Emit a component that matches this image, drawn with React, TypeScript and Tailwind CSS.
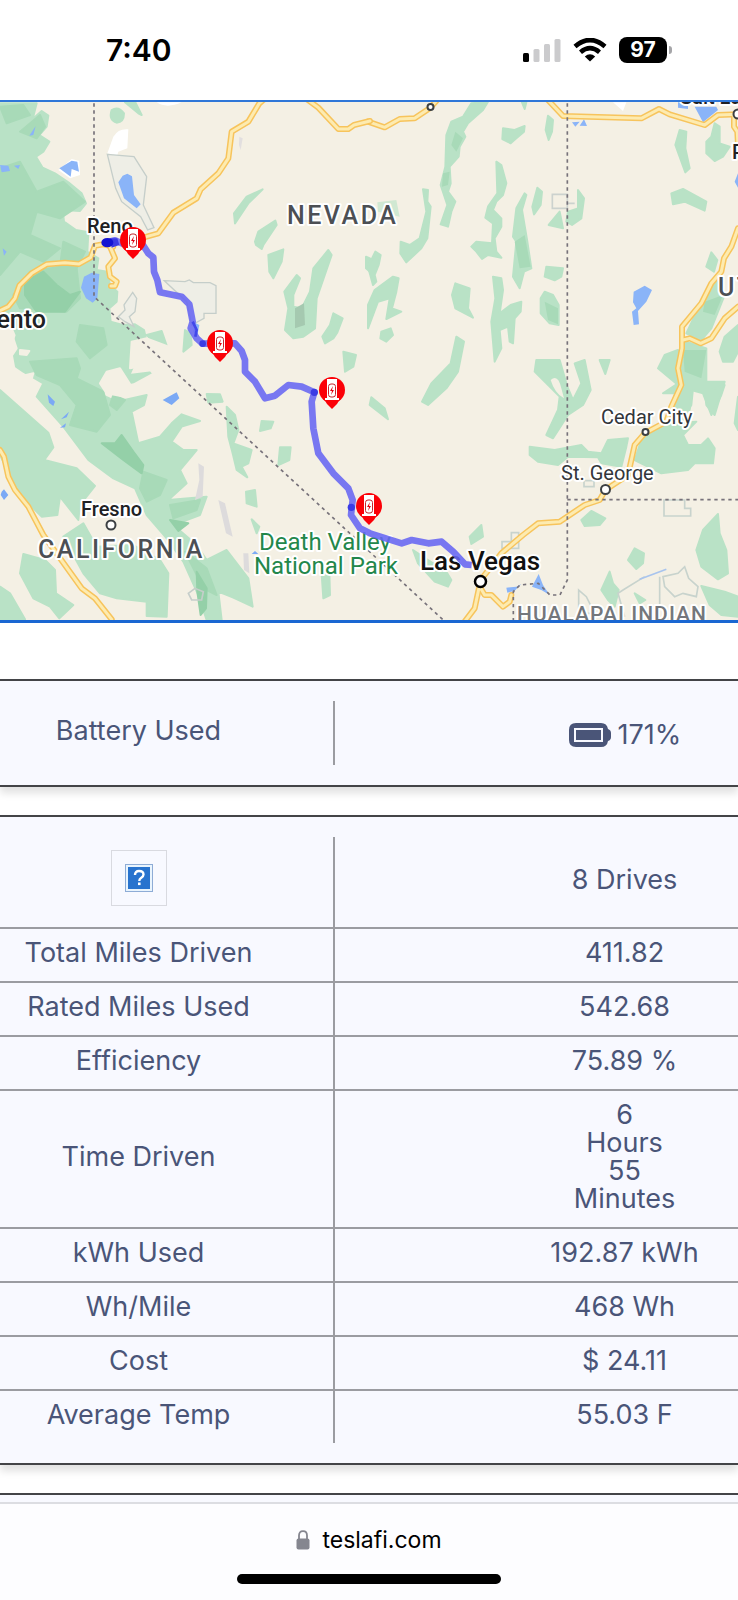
import React from "react";

const quadrants = {
  nw: "translate(0 95) scale(0.33333)",
  ne: "translate(368 95) scale(0.33333)",
  sw: "translate(0 360) scale(0.33333)",
  se: "translate(368 360) scale(0.33333)",
};

const forestNw = [
  "M0 25 L110 25 L98 72 L125 48 L145 62 L140 95 L118 120 L148 140 L130 170 L108 185 L128 218 L165 235 L205 262 L245 295 L258 325 L240 348 L188 345 L192 380 L228 405 L265 412 L262 470 L295 490 L290 525 L322 530 L330 570 L352 590 L350 620 L328 640 L332 680 L368 690 L405 688 L432 705 L440 740 L410 790 L388 840 L455 832 L400 862 L320 880 L305 900 L350 920 L440 900 L432 930 L395 950 L415 1045 L480 1025 L515 985 L545 958 L600 978 L545 995 L515 1040 L550 1065 L590 1065 L540 1125 L560 1165 L505 1215 L620 1205 L600 1260 L520 1290 L590 1350 L620 1395 L680 1365 L745 1450 L758 1535 L700 1508 L655 1490 L665 1575 L620 1575 L595 1500 L550 1400 L500 1330 L440 1260 L405 1180 L340 1150 L265 1095 L190 995 L110 905 L130 865 L70 830 L48 815 L38 760 L50 720 L20 650 L0 640 Z",
  "M335 45 Q355 32 372 55 Q372 82 350 83 Q325 75 335 45 Z",
  "M375 22 L405 20 L425 60 L415 55 Z",
  "M705 385 L702 355 L740 305 L788 283 L745 325 Z",
  "M765 440 L775 410 L826 377 L830 390 L790 450 L785 462 L768 450 Z",
  "M805 480 L850 463 L845 500 L820 550 L808 530 Z",
  "M985 465 L995 480 L950 610 L945 700 L910 725 L880 730 L855 705 L865 640 L853 590 L890 540 L900 550 L880 600 L880 635 L905 640 L930 590 L940 520 Z",
  "M1000 655 L1028 670 L1012 712 L1000 730 L975 745 L967 725 L990 690 Z",
  "M1030 770 L1068 780 L1060 815 L1035 830 Z",
  "M440 720 L485 708 L500 752 L460 740 Z",
  "M555 705 L572 715 L575 750 L550 770 Z",
  "M1098 485 L1110 490 L1110 530 L1098 520 Z",
];

const forestNe = [
  "M310 25 L360 20 L345 45 L300 85 L285 110 L292 125 L275 155 L272 185 L245 215 L248 265 L240 290 L262 320 L250 350 L240 395 L218 388 L238 330 L218 270 L232 215 L235 120 L250 80 L285 65 Z",
  "M405 100 L440 105 L470 93 L468 110 L445 130 L428 145 L403 132 Z",
  "M462 22 L475 22 L470 42 Z",
  "M540 62 L555 75 L552 110 L542 135 L533 105 Z",
  "M385 200 L400 210 L415 265 L405 300 L385 320 L375 345 L400 370 L400 395 L380 430 L385 470 L400 488 L360 480 L342 492 L325 470 L310 455 L325 440 L372 445 L375 385 L352 368 L360 335 L388 295 Z",
  "M470 295 L475 300 L462 345 L478 440 L490 520 L468 530 L455 580 L435 545 L445 440 L435 425 L445 340 Z",
  "M508 278 L522 290 L518 330 L498 358 L493 335 Z",
  "M165 283 L180 285 L178 320 L188 335 L178 430 L160 460 L115 502 L97 475 L98 440 L125 450 L155 430 L175 350 Z",
  "M0 515 L22 470 L38 480 L32 510 L20 540 L25 560 L15 570 Z",
  "M0 630 L20 585 L75 545 L92 550 L85 590 L72 640 L100 650 L55 672 L65 610 L30 620 L0 700 Z",
  "M40 710 L68 700 L75 720 L55 740 L37 730 Z",
  "M262 565 L305 580 L300 640 L315 668 L262 640 L252 600 Z",
  "M375 545 L400 550 L405 585 L395 655 L428 630 L460 620 L458 650 L440 670 L435 745 L425 740 L420 695 L395 705 L400 760 L380 800 L375 740 L370 680 L382 610 Z",
  "M535 515 L585 520 L580 545 L560 556 L530 545 Z",
  "M530 590 L555 600 L572 630 L572 690 L545 685 L518 655 L518 610 Z",
  "M630 285 L648 310 L640 370 L612 390 L595 380 L600 350 L630 340 Z",
  "M575 350 L585 400 L542 390 Z",
  "M265 725 L288 740 L270 830 L235 880 L180 930 L162 920 L190 865 L248 805 Z",
  "M935 105 L955 110 L952 160 L965 220 L952 232 L922 150 Z",
  "M1040 85 L1055 95 L1055 145 L1085 155 L1065 185 L1040 198 L1015 175 L1015 140 L1030 125 Z",
  "M910 295 L945 282 L1015 320 L1010 347 L950 320 L915 328 Z",
  "M1030 472 L1048 495 L1038 530 L1015 515 Z",
  "M1045 550 L1070 600 L1030 700 L1000 735 L955 715 L1000 620 Z",
  "M1110 690 L1070 725 L1055 770 L1065 800 L1095 800 L1110 770 Z",
  "M955 740 L1015 760 L1015 860 L1070 860 L1040 960 L1015 930 L1010 880 L975 880 L970 930 L945 975 L910 930 L930 870 L870 820 L890 780 L930 765 L942 800 Z",
];

const forestSw = [
  "M0 90 L45 130 L145 218 L160 262 L133 300 L230 325 L285 378 L240 435 L235 480 L180 410 L172 465 L125 470 L55 400 L0 285 Z",
  "M70 582 L135 600 L165 630 L168 700 L220 735 L178 775 L150 740 L100 715 L60 640 Z",
  "M0 680 L30 700 L75 778 L0 778 Z",
  "M190 530 L250 490 L290 560 L400 555 L480 600 L505 640 L500 770 L440 768 L440 725 L350 715 L300 700 L250 640 Z",
  "M680 140 L705 165 L715 210 L700 250 L755 270 L745 310 L725 320 L742 352 L710 330 L698 280 L685 230 Z",
  "M785 183 L820 185 L812 205 L780 213 Z",
  "M620 102 L660 103 L668 125 L625 128 Z",
  "M840 262 L872 262 L868 300 L835 315 Z",
  "M738 395 L765 390 L770 440 L740 430 Z",
  "M755 478 L778 500 L770 520 Z",
  "M965 640 L988 640 L990 705 L970 715 Z",
];

const forestSe = [
  "M505 0 L575 0 L598 80 L615 120 L640 70 L620 10 L650 0 L668 90 L645 135 L600 165 L555 235 L535 225 L570 150 L575 110 L500 35 Z",
  "M485 260 L560 270 L640 255 L660 275 L700 280 L720 240 L780 235 L775 260 L760 320 L700 310 L690 292 L600 290 L570 315 L510 305 L485 285 Z",
  "M830 210 L920 190 L985 185 L945 225 L960 255 L1000 255 L1020 235 L1040 265 L1035 310 L980 310 L960 330 L880 340 L800 300 Z",
  "M885 100 L945 60 L1000 60 L1030 90 L1070 75 L1060 105 L1030 165 L1005 100 L970 90 L965 150 L920 150 L930 100 Z",
  "M10 112 L50 145 L60 178 L5 135 Z",
  "M640 480 L670 453 L712 475 L695 495 L650 498 Z",
  "M340 495 L345 530 L310 552 L305 530 Z",
  "M135 570 L180 600 L235 635 L250 660 L240 680 L200 665 L150 610 Z",
  "M1050 462 L1055 520 L1075 570 L1080 640 L1050 658 L1000 620 L985 570 L1005 510 Z",
  "M800 565 L828 580 L825 610 L805 627 L780 600 Z",
  "M725 635 L735 670 L752 690 L740 740 L720 720 L700 690 Z",
  "M1000 678 L1070 695 L1110 710 L1110 770 L1060 765 L1025 735 Z",
  "M800 700 L832 720 L815 730 Z",
  "M695 0 L725 0 L712 42 Z",
  "M1110 110 L1100 190 L1110 210 Z",
];

const shade = [
  "M0 220 L60 200 L110 290 L190 260 L255 320 L180 370 L110 350 L90 420 L180 460 L130 500 L60 470 L0 540 Z",
  "M60 110 L120 60 L135 95 L110 130 Z",
  "M0 35 L70 30 L90 60 L20 85 Z",
  "M190 440 L255 470 L230 520 L240 610 L200 650 L60 640 L40 600 L90 530 L180 515 Z",
  "M240 690 L310 700 L320 750 L270 790 L230 740 Z",
  "M90 800 L230 790 L240 820 L230 850 L310 890 L330 960 L290 1010 L210 990 L230 930 L180 870 L110 840 Z",
  "M340 900 L375 915 L350 945 L330 930 Z",
  "M430 1130 L500 1155 L480 1200 L440 1220 L420 1180 Z",
  "M510 1230 L600 1215 L590 1245 L520 1270 Z",
  "M80 1395 L150 1430 L140 1475 L90 1440 Z",
  "M555 1370 L620 1420 L650 1500 L610 1480 Z",
];

const shadeDark = [
  "M75 560 L130 530 L170 570 L210 600 L240 590 L195 650 L110 650 L75 600 Z",
  "M305 1045 L345 1045 L365 1020 L400 1070 L430 1110 L425 1135 L370 1095 Z",
  "M510 1275 L565 1285 L535 1308 Z",
  "M590 1430 L620 1480 L618 1540 L602 1560 L592 1490 Z",
];

const clearings = [
  "M0 795 L0 740 L40 730 L50 760 L30 790 Z",
  "M60 765 L88 768 L80 780 L60 778 Z",
  "M78 840 L100 835 L92 863 Z",
  "M300 865 L320 830 L360 820 L392 870 L375 905 L320 895 Z",
  "M395 740 L440 730 L520 760 L540 800 L470 850 L440 810 L390 820 Z",
  "M140 1180 L180 1200 L160 1230 Z",
];

const roadsNw = [
  "M0 647 L25 635 L45 610 L58 572 L95 535 L140 508 L195 503 L237 507 L272 487 L285 452 L310 448 L340 455",
  "M330 455 L345 490 L325 515 L330 545 L350 560 L345 573 L333 573",
  "M400 428 L440 425 L475 415 L520 353 L590 310 L602 283 L655 235 L685 190 L695 110 L745 80 L778 25 L790 15",
  "M920 12 L955 38 L1015 102 L1045 102 L1062 90 L1110 78",
];
const roadsNe = [
  "M0 80 L50 97 L95 72 L140 70 L185 40 L205 18",
  "M540 15 L585 63 L820 70 L873 42 L905 58 L1010 90 L1050 60 L1110 58",
  "M1098 60 L1098 95 L1108 110 L1110 150",
  "M1110 400 L1090 455 L1068 490 L1060 530 L1030 565 L1000 625 L942 695 L942 760 L930 820 L940 870 L910 935 L895 980 L830 1015 L800 1050 L780 1140 L712 1185 L695 1215 L650 1230 L575 1280 L510 1285 L465 1320 L400 1375 L338 1455 L320 1540 L290 1580",
  "M945 735 L965 730 L998 745 L1030 730 L1070 670 L1110 635",
  "M338 1480 L350 1500 L370 1500 L405 1535 L425 1520 L430 1500",
];
const roadsSw = ["M0 270 L12 290 L25 350 L45 390 L85 440 L130 525 L245 685 L285 715 L335 778"];

const route =
  "M322 442 L345 436 L365 445 L430 452 L445 475 L460 487 L462 530 L472 555 L480 592 L545 605 L568 628 L578 680 L572 700 L590 730 L608 746 L660 745 L705 745 L725 768 L735 795 L735 830 L765 860 L795 910 L825 902 L865 870 L905 875 L943 892 L935 920 L940 1000 L955 1075 L1000 1135 L1045 1180 L1058 1215 L1053 1260 L1080 1300 L1110 1315 L1205 1345 L1235 1335 L1285 1345 L1325 1340 L1360 1370 L1395 1408 L1415 1410";

const chargers = [
  { x: 133, y: 240 },
  { x: 220, y: 343 },
  { x: 332, y: 390 },
  { x: 369, y: 506 },
];

function Shapes({ items, className }: { items: string[]; className: string }) {
  return (
    <g className={className} strokeWidth="6" strokeLinejoin="round">
      {items.map((d) => (
        <path key={d} d={d} />
      ))}
    </g>
  );
}

function Roads({ items }: { items: string[] }) {
  return (
    <g fill="none" strokeLinejoin="round" strokeLinecap="round">
      {items.map((d) => (
        <path key={d} d={d} stroke="#f7c45c" strokeWidth="18" />
      ))}
      {items.map((d) => (
        <path key={d} d={d} stroke="#fdebb0" strokeWidth="9" />
      ))}
    </g>
  );
}

function Charger({ x, y }: { x: number; y: number }) {
  return (
    <g transform={`translate(${x} ${y})`}>
      <circle r="13" fill="#fb0007" />
      <path d="M-8 9 L8 9 L5 14 L2 17 L0 19 L-2 17 L-5 14 Z" fill="#fb0007" />
      <path d="M-5 -11 H5 V8 H7 V10 H-7 V8 H-5 Z" fill="#fff" />
      <rect x="-3.5" y="-6" width="7" height="13" rx="2.5" fill="#fff" stroke="#c4252c" strokeWidth="1" />
      <path d="M1 -4 L-2 1 H0 L-1 5 L2 0 H0 Z" fill="#e00010" />
    </g>
  );
}

function TripMap() {
  return (
    <svg viewBox="0 102 738 518" className="block h-auto w-full" role="img" aria-label="Trip route">
      <rect y="101" width="738" height="520" fill="#f4f0e4" />
      <g transform={quadrants.nw}>
        <Shapes items={forestNw} className="fill-[#b9e2c6] stroke-[#b9e2c6]" />
        <Shapes items={shade} className="fill-[#a8dab8] stroke-[#a8dab8]" />
        <Shapes items={shadeDark} className="fill-[#94d0a8] stroke-[#94d0a8]" />
        <Shapes items={clearings} className="fill-[#f4f0e4] stroke-[#f4f0e4]" />
        <path d="M885 640 L912 625 L915 690 L885 700 Z" fill="#a5c9b0" />
        <path d="M718 125 L728 130 L722 165 L717 150 Z" fill="#e2dfdf" />
        <path
          d="M470 22 H545 Q500 42 470 22 Z M340 125 Q355 100 385 103 L382 160 L355 170 L345 205 L333 205 L335 178 L322 175 Z"
          fill="#fff"
        />
        <g fill="#eeeee6" stroke="#c5ceca" strokeWidth="4">
          <path d="M322 178 L402 185 L440 245 L430 330 L462 398 L443 405 L422 365 L365 320 L347 280 Z" />
          <path d="M493 557 L555 560 L568 555 L580 563 L630 563 L648 572 L648 655 L612 655 L612 670 L575 690 L560 620 Z" />
          <path d="M398 592 L410 610 L405 650 L388 665 L402 695 L375 680 L355 665 L375 645 L372 630 Z" />
        </g>
        <path d="M175 225 L215 192 L238 198 L240 240 L210 250 Z" fill="#fff" />
        <path
          d="M178 220 L215 197 L232 200 L237 230 L215 222 L212 245 Z M355 262 L368 242 L382 236 L396 244 L402 300 L422 328 L410 340 L372 310 Z M88 122 L107 93 L100 120 Z M0 210 L25 212 L30 228 L5 232 Z M42 212 L60 210 L55 222 Z M252 545 L275 533 L298 537 L292 610 L278 623 L258 610 L243 578 Z M8 460 L20 470 L12 482 Z M585 683 L598 690 L592 720 L580 710 Z"
          fill="#8ab4f8"
        />
      </g>
      <g transform={quadrants.ne}>
        <Shapes items={forestNe} className="fill-[#b9e2c6] stroke-[#b9e2c6]" />
        <path d="M28 322 L85 315 L95 365 L30 350 Z" fill="#d0e8d2" />
        <path
          d="M440 440 L470 420 L488 515 L455 520 Z M530 620 L570 640 L570 688 L540 675 Z M1010 620 L1065 600 L1040 660 L1005 650 Z M945 765 L1015 765 L1000 850 L950 830 Z M225 235 L245 230 L240 270 L222 275 Z M262 110 L285 130 L265 170 L250 150 Z"
          fill="#a8dab8"
        />
        <path d="M553 298 H598 V340 H553 Z M598 325 H620" fill="none" stroke="#ccd2ce" strokeWidth="5" />
        <path d="M735 22 H775 L765 48 Z" fill="#fff" />
        <path
          d="M930 22 H960 V42 L930 38 Z M980 35 L1045 35 L1050 45 L1005 82 Z M612 82 L635 80 L622 95 Z M635 92 L648 73 L657 93 Z M1110 235 L1100 260 L1110 278 Z M797 590 L830 572 L852 585 L835 620 L810 648 L813 688 L797 690 L792 650 L805 640 L795 622 Z"
          fill="#8ab4f8"
        />
      </g>
      <g transform={quadrants.sw}>
        <Shapes items={forestSw} className="fill-[#b9e2c6] stroke-[#b9e2c6]" />
        <path
          d="M595 310 L612 320 L608 410 L585 420 L598 360 Z M655 420 L675 430 L698 530 L678 520 Z M730 580 L745 580 L748 640 L732 630 Z"
          fill="#dddbdc"
        />
        <path d="M565 700 L585 685 L610 695 L605 720 L575 720 Z" fill="none" stroke="#c5ceca" strokeWidth="5" />
        <path
          d="M143 103 L165 125 L160 138 L147 128 Z M183 178 L207 155 L200 172 Z M180 203 L198 190 L195 202 Z M488 120 L530 97 L538 115 L515 135 Z M5 395 L12 388 L25 405 L12 420 L2 405 Z M755 582 L765 573 L775 582 Z"
          fill="#7ba9f5"
        />
        <Roads items={roadsSw} />
      </g>
      <g transform={quadrants.se}>
        <Shapes items={forestSe} className="fill-[#b9e2c6] stroke-[#b9e2c6]" />
        <path d="M548 60 Q570 40 580 85 L588 115 Q560 100 548 60 Z" fill="#f4f0e4" />
        <path
          d="M888 420 H950 V445 H968 V468 H888 Z M402 545 H430 V518 H452 V565 H402 Z M648 362 H678 V380 H648 Z M632 690 L632 760 L680 760 L655 710 L632 690 Z M875 650 V740 M885 650 L930 640 L950 620 L962 655 L990 680 L985 710 L945 700 L920 710 L890 680 Z M765 690 L750 700 L770 770 M765 690 L830 650"
          fill="none"
          stroke="#c8d3cd"
          strokeWidth="5"
        />
        <path d="M815 658 L895 628" stroke="#a8c4ee" strokeWidth="5" />
        <path
          d="M415 683 L445 680 L460 672 L440 692 L418 698 Z M492 680 L512 642 L525 675 L545 705 L520 690 Z"
          fill="#8ab4f8"
        />
      </g>
      <g transform={quadrants.ne}>
        <Roads items={roadsNe} />
      </g>
      <g transform={quadrants.nw}>
        <Roads items={roadsNw} />
        <g fill="none" stroke="#77727a" strokeWidth="5" strokeDasharray="10 11">
          <path d="M282 25 V605 L1330 1575" />
          <path d="M1702 25 V1455 L1680 1500 L1650 1500 L1615 1465 L1560 1470 L1540 1490 V1575" />
          <path d="M1702 1214 H2214" />
        </g>
      </g>

      <g className="font-medium [paint-order:stroke] [stroke-linejoin:round] [stroke-width:4px] [stroke:#ffffff]">
        <text x="87" y="233" className="fill-[#202124] text-[20px]">Reno</text>
        <text x="287" y="224" className="fill-[#4c4f54] text-[25px] tracking-widest">NEVADA</text>
        <text x="46" y="328" textAnchor="end" className="fill-[#202124] text-[25px]">Sacramento</text>
        <text x="38" y="558" className="fill-[#4c4f54] text-[25px] tracking-widest">CALIFORNIA</text>
        <text x="81" y="516" className="fill-[#202124] text-[20px]">Fresno</text>
        <text x="325" y="550" textAnchor="middle" className="fill-[#23874b] text-[24px] font-normal">Death Valley</text>
        <text x="326" y="574" textAnchor="middle" className="fill-[#23874b] text-[24px] font-normal">National Park</text>
        <text x="420" y="570" className="fill-[#111111] text-[26px]">Las Vegas</text>
        <text x="601" y="424" className="fill-[#33363b] text-[20px] font-normal">Cedar City</text>
        <text x="561" y="480" className="fill-[#33363b] text-[20px] font-normal">St. George</text>
        <text x="517" y="621" className="fill-[#74777c] text-[21px] tracking-wider">HUALAPAI INDIAN</text>
        <text x="718" y="296" className="fill-[#4c4f54] text-[25px] tracking-widest">UTAH</text>
        <text x="732" y="159" className="fill-[#202124] text-[20px]">Provo</text>
        <text x="680" y="104" className="fill-[#202124] text-[20px]">Salt Lake City</text>
      </g>
      <g fill="#fff" stroke="#3c4043" strokeWidth="2">
        <circle cx="111" cy="525" r="4.5" />
        <circle cx="430.500" cy="107" r="3" />
        <circle cx="645.500" cy="432" r="3" />
        <circle cx="605.500" cy="489.500" r="4.5" />
        <circle cx="738" cy="114" r="4.5" />
        <circle cx="480.500" cy="581.500" r="5.5" stroke="#000" strokeWidth="2.500" />
      </g>
      <g transform={quadrants.nw}>
        <path d={route} fill="none" stroke="#6765f2" strokeOpacity="0.88" strokeWidth="20" strokeLinejoin="round" />
        <path d="M578 680 L590 705 L586 725" fill="none" stroke="#4247ea" strokeWidth="8" />
        <g fill="#3b3be4">
          <circle cx="608" cy="746" r="10" />
          <circle cx="943" cy="892" r="11" />
          <circle cx="1054" cy="1237" r="11" />
          <path d="M330 430 L352 430 L358 450 L335 458 Z" />
        </g>
        <ellipse cx="322" cy="443" rx="18" ry="14" fill="#1414d2" />
      </g>
      {chargers.map((c) => (
        <Charger key={c.x} x={c.x} y={c.y} />
      ))}
    </svg>
  );
}

const rows: { label: string; value: string }[] = [
  { label: "Total Miles Driven", value: "411.82" },
  { label: "Rated Miles Used", value: "542.68" },
  { label: "Efficiency", value: "75.89 %" },
  { label: "Time Driven", value: "6\nHours\n55\nMinutes" },
  { label: "kWh Used", value: "192.87 kWh" },
  { label: "Wh/Mile", value: "468 Wh" },
  { label: "Cost", value: "$ 24.11" },
  { label: "Average Temp", value: "55.03 F" },
];

const labelCell = "w-[334px] border-r-2 border-[#9b9ca1] pr-14 text-center font-normal";
const valueCell = "pl-44 text-center";
const card = "border-y-2 border-[#434447] bg-[#f8f9ff] py-5 shadow-[0_6px_8px_rgba(0,0,0,0.12)]";

function StatusBar() {
  return (
    <header className="flex h-[100px] items-center justify-between pr-[66px] pl-[106px]">
      <time className="font-[Inter] text-[30px] leading-8 font-semibold">7:40</time>
      <div className="flex items-center gap-3">
        <svg width="38" height="24" viewBox="0 0 38 24" aria-label="Signal">
          <rect x="0" y="15" width="6" height="9" rx="1.5" fill="#000" />
          <rect x="10.500" y="11" width="6" height="13" rx="1.5" fill="#cbcbcd" />
          <rect x="21" y="6" width="6" height="18" rx="1.5" fill="#cbcbcd" />
          <rect x="31.500" y="1" width="6" height="23" rx="1.5" fill="#cbcbcd" />
        </svg>
        <svg width="34" height="24" viewBox="0 0 34 24" aria-label="Wi-Fi">
          <path d="M17 23.500 L11.800 18.400 Q17 14.200 22.200 18.400 Z" fill="#000" />
          <path d="M7.500 14.200 Q17 6.200 26.500 14.200 M2 8.500 Q17 -4.500 32 8.500" fill="none" stroke="#000" strokeWidth="4.6" />
        </svg>
        <div className="flex items-center gap-[2px]">
          <span className="flex h-[26px] w-[48px] items-center justify-center rounded-lg bg-black font-[Inter] text-[21px] leading-6 font-bold text-white">
            97
          </span>
          <span className="h-2 w-[3px] rounded-r-full bg-[#a5a5a8]" />
        </div>
      </div>
    </header>
  );
}

function BatteryIcon() {
  return (
    <svg width="44" height="26" viewBox="0 0 44 26" aria-hidden="true">
      <path
        fillRule="evenodd"
        fill="#4a5578"
        d="M8 1 H33 Q39 1 40 7 Q43 8 43 11 V15 Q43 18 40 19 Q39 25 33 25 H8 Q1 25 1 18 V8 Q1 1 8 1 Z M6 6 V20 H35 V6 Z"
      />
      <rect x="8" y="8" width="25" height="10" fill="#4a5578" />
    </svg>
  );
}

function MissingImage() {
  return (
    <span className="mx-auto flex h-14 w-14 items-center justify-center border border-[#d9dae0]">
      <svg width="28" height="28" viewBox="0 0 28 28" role="img" aria-label="Drives">
        <rect x="0.5" y="0.5" width="27" height="27" fill="#e9f4fd" stroke="#8eacd6" />
        <rect x="3" y="3" width="22" height="22" fill="#2873ce" />
        <path
          d="M10 11 Q10 7 14 7 Q18.500 7 18.500 10.500 Q18.500 12.500 16 14 Q14.300 15 14.300 17"
          fill="none"
          stroke="#fff"
          strokeWidth="2.400"
        />
        <rect x="13" y="18.500" width="2.600" height="2.600" fill="#fff" />
      </svg>
    </span>
  );
}

export default function App() {
  return (
    <div className="flex min-h-screen flex-col overflow-hidden bg-white">
      <StatusBar />
      <main className="flex flex-1 flex-col">
        <section className="overflow-hidden border-t-2 border-b-[3px] border-t-[#2f77d8] border-b-[#1a67d2] font-[Roboto]">
          <TripMap />
        </section>

        <div className="mt-14 flex flex-1 flex-col gap-7 font-[Inter] text-[27px] leading-7 text-[#4a5578]">
          <section className={card}>
            <table className="w-full table-fixed border-collapse">
              <tbody>
                <tr className="h-16">
                  <th scope="row" className={`${labelCell} pb-1`}>
                    Battery Used
                  </th>
                  <td className={valueCell}>
                    <span className="flex items-center justify-center gap-1.5 pt-1">
                      <BatteryIcon />
                      171%
                    </span>
                  </td>
                </tr>
              </tbody>
            </table>
          </section>

          <section className={card}>
            <table className="w-full table-fixed border-collapse">
              <tbody>
                <tr className="h-[91px]">
                  <th scope="row" className={`${labelCell} pb-2`}>
                    <MissingImage />
                  </th>
                  <td className={`${valueCell} pb-1`}>8 Drives</td>
                </tr>
                {rows.map((row) => (
                  <tr key={row.label} className="border-t-2 border-[#9b9ca1]">
                    <th scope="row" className={`${labelCell} pt-2.5 pb-3.5`}>
                      {row.label}
                    </th>
                    <td className={`${valueCell} pt-2.5 pb-3.5 whitespace-pre-line`}>{row.value}</td>
                  </tr>
                ))}
              </tbody>
            </table>
          </section>

          <section className="flex-1 border-t-2 border-[#434447] bg-[#f8f9ff]" />
        </div>
      </main>

      <footer className="flex h-[98px] flex-col items-center border-t-2 border-[#dcdde2] bg-[#fdfdff]">
        <a href="https://teslafi.com" className="mt-5 flex items-center gap-3 font-[Inter] text-[23px] leading-8 text-black">
          <svg width="14" height="20" viewBox="0 0 14 20" aria-hidden="true">
            <path d="M3 9 V5.500 Q3 1.200 7 1.200 Q11 1.200 11 5.500 V9" fill="none" stroke="#85868f" strokeWidth="1.800" />
            <rect x="0.500" y="8.500" width="13" height="11" rx="2" fill="#85868f" />
          </svg>
          teslafi.com
        </a>
        <div className="mt-[18px] h-[10px] w-[264px] rounded-full bg-black" />
      </footer>
    </div>
  );
}
